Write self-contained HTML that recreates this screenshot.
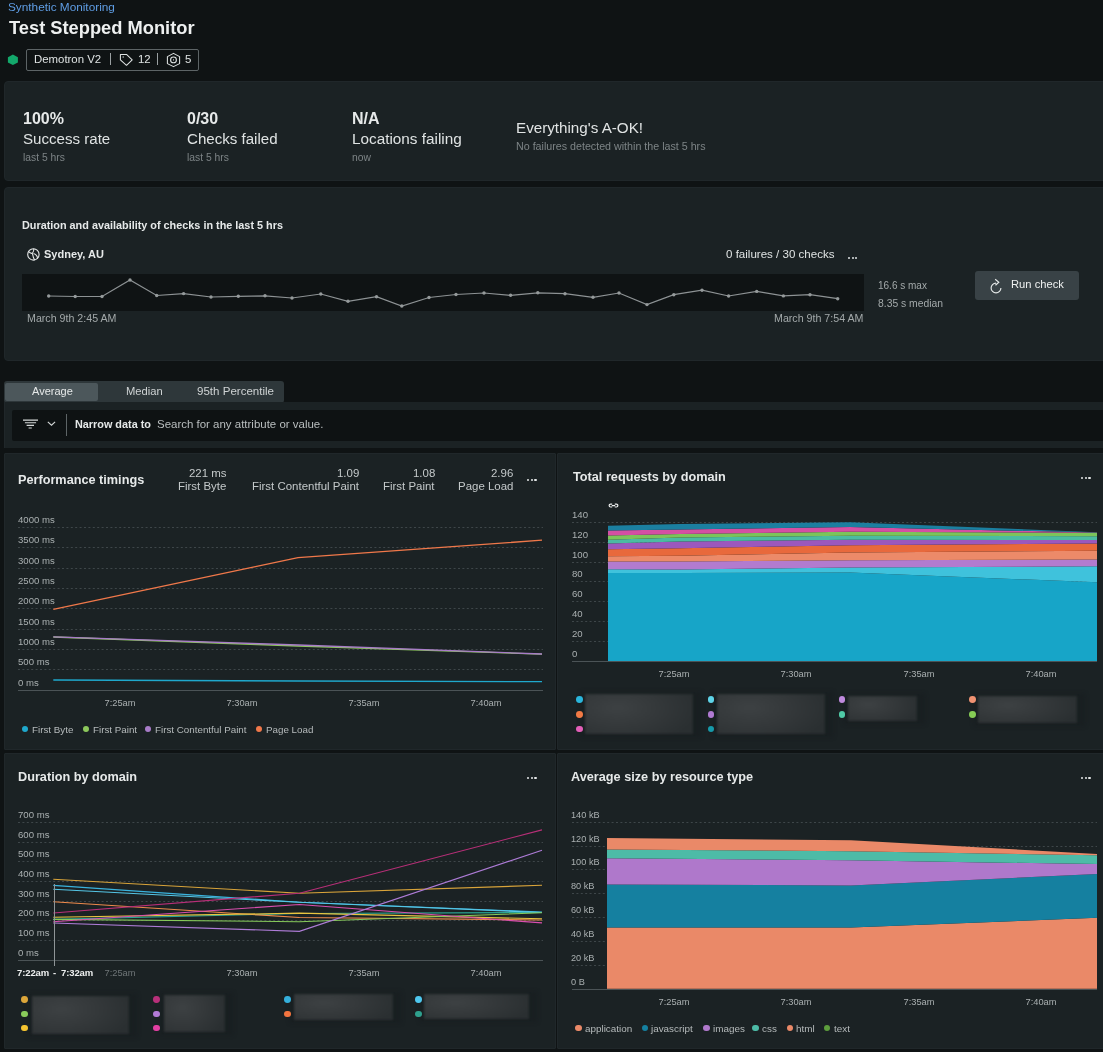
<!DOCTYPE html>
<html><head><meta charset="utf-8"><style>
html,body{margin:0;padding:0;background:#0f1314;}
body{width:1103px;height:1052px;position:relative;overflow:hidden;font-family:"Liberation Sans", sans-serif;}
.t{position:absolute;white-space:nowrap;will-change:transform;}
</style></head><body>
<div class="t" style="left:7.60px;top:2.00px;font-size:11.8px;line-height:11.8px;color:#5f9de4;font-weight:400;">Synthetic Monitoring</div>
<div class="t" style="left:9.00px;top:19.00px;font-size:18.3px;line-height:18.3px;color:#eef0f0;font-weight:700;">Test Stepped Monitor</div>
<svg style="position:absolute;left:0;top:0" width="30" height="80"><path d="M12.9 54.6 L17.9 57.3 L17.9 62.5 L12.9 65.1 L7.9 62.5 L7.9 57.3 Z" fill="#13a86b"/></svg>
<div style="position:absolute;left:26px;top:48.5px;width:171px;height:20px;border:1px solid #5d6466;border-radius:2px"></div>
<div class="t" style="left:34.00px;top:54.00px;font-size:11.4px;line-height:11.4px;color:#dfe3e3;font-weight:400;">Demotron V2</div>
<div style="position:absolute;left:110px;top:53px;width:1px;height:12px;background:#9aa0a2;"></div>
<svg style="position:absolute;left:0;top:0" width="200" height="80"><path d="M120.4 54.4 H126.5 L132.2 59.8 L126.5 65.3 L120.4 59.9 Z" fill="none" stroke="#dfe3e3" stroke-width="1.05" stroke-linejoin="round"/><circle cx="123.2" cy="56.9" r="0.75" fill="#bfc4c4"/><path d="M173.5 53.4 L179.6 56.6 L179.6 63.6 L173.5 66.6 L167.4 63.6 L167.4 56.6 Z" fill="none" stroke="#dfe3e3" stroke-width="1.05" stroke-linejoin="round"/><circle cx="173.5" cy="59.9" r="2.9" fill="none" stroke="#dfe3e3" stroke-width="1.1"/><ellipse cx="173.5" cy="59.9" rx="0.5" ry="0.8" fill="#bfc4c4"/></svg>
<div class="t" style="left:137.50px;top:54.00px;font-size:11.4px;line-height:11.4px;color:#dfe3e3;font-weight:400;">12</div>
<div style="position:absolute;left:157px;top:53px;width:1px;height:12px;background:#9aa0a2;"></div>
<div class="t" style="left:185.00px;top:54.00px;font-size:11.4px;line-height:11.4px;color:#dfe3e3;font-weight:400;">5</div>
<div style="position:absolute;left:4px;top:81px;width:1110px;height:98px;background:#1b2224;border-radius:4px;border:1px solid #20272a"></div>
<div class="t" style="left:22.50px;top:111.00px;font-size:16px;line-height:16px;color:#e6e9e9;font-weight:700;">100%</div>
<div class="t" style="left:22.50px;top:131.00px;font-size:15.1px;line-height:15.1px;color:#dfe3e3;font-weight:400;">Success rate</div>
<div class="t" style="left:22.50px;top:153.00px;font-size:10.3px;line-height:10.3px;color:#7d8486;font-weight:400;">last 5 hrs</div>
<div class="t" style="left:187.00px;top:111.00px;font-size:16px;line-height:16px;color:#e6e9e9;font-weight:700;">0/30</div>
<div class="t" style="left:187.00px;top:131.00px;font-size:15.1px;line-height:15.1px;color:#dfe3e3;font-weight:400;">Checks failed</div>
<div class="t" style="left:187.00px;top:153.00px;font-size:10.3px;line-height:10.3px;color:#7d8486;font-weight:400;">last 5 hrs</div>
<div class="t" style="left:351.50px;top:111.00px;font-size:16px;line-height:16px;color:#e6e9e9;font-weight:700;">N/A</div>
<div class="t" style="left:351.50px;top:131.00px;font-size:15.3px;line-height:15.3px;color:#dfe3e3;font-weight:400;">Locations failing</div>
<div class="t" style="left:351.50px;top:153.00px;font-size:10.3px;line-height:10.3px;color:#7d8486;font-weight:400;">now</div>
<div class="t" style="left:516.40px;top:120.00px;font-size:15.2px;line-height:15.2px;color:#e1e4e4;font-weight:400;">Everything's A-OK!</div>
<div class="t" style="left:516.40px;top:141.00px;font-size:10.7px;line-height:10.7px;color:#7d8486;font-weight:400;">No failures detected within the last 5 hrs</div>
<div style="position:absolute;left:4px;top:187px;width:1110px;height:172px;background:#1b2224;border-radius:4px;border:1px solid #20272a"></div>
<div class="t" style="left:22.40px;top:220.00px;font-size:10.85px;line-height:10.85px;color:#e6e9e9;font-weight:700;">Duration and availability of checks in the last 5 hrs</div>
<svg style="position:absolute;left:0;top:0" width="60" height="280"><circle cx="33.4" cy="254.4" r="5.7" fill="none" stroke="#e6e9e9" stroke-width="1.1"/><path d="M28.3 251.4 Q31 254.2 32.6 253 Q33.9 251.5 33.8 248.8 M32.4 253.6 Q33.2 256.4 33.5 257.8 Q34.2 259.4 34.8 260.2 M33.5 253.6 Q35.8 254.4 36.6 255.6 Q37.6 257 37.5 258.6" fill="none" stroke="#e6e9e9" stroke-width="1.05"/></svg>
<div class="t" style="left:43.70px;top:249.00px;font-size:11px;line-height:11px;color:#e6e9e9;font-weight:700;">Sydney, AU</div>
<div class="t" style="right:268.60px;top:249.00px;font-size:11.56px;line-height:11.56px;color:#dfe3e3;font-weight:400;">0 failures / 30 checks</div>
<div style="position:absolute;left:848.0px;top:257px;width:2.2px;height:2.2px;background:#dfe3e3;border-radius:1px"></div>
<div style="position:absolute;left:851.6px;top:257px;width:2.2px;height:2.2px;background:#dfe3e3;border-radius:1px"></div>
<div style="position:absolute;left:855.2px;top:257px;width:2.2px;height:2.2px;background:#dfe3e3;border-radius:1px"></div>
<div style="position:absolute;left:22px;top:274px;width:842px;height:37px;background:#0f1314;"></div>
<svg style="position:absolute;left:0;top:0" width="1103" height="360"><path d="M48.7 296.0 L75.2 296.5 L102.0 296.5 L130.0 280.0 L156.7 295.5 L183.6 293.6 L211.0 297.0 L238.3 296.3 L265.0 295.8 L292.0 298.0 L320.8 294.0 L348.0 301.3 L376.5 296.7 L401.8 306.0 L429.0 297.5 L456.0 294.5 L484.0 293.0 L510.6 295.3 L537.8 292.8 L565.0 293.7 L593.0 297.3 L619.0 293.0 L647.0 304.6 L673.8 294.7 L702.0 290.2 L728.6 296.0 L756.7 291.4 L783.4 295.9 L810.0 294.7 L837.7 298.7" fill="none" stroke="#8d9294" stroke-width="1.2"/><circle cx="48.7" cy="296.0" r="1.7" fill="#959a9b"/><circle cx="75.2" cy="296.5" r="1.7" fill="#959a9b"/><circle cx="102.0" cy="296.5" r="1.7" fill="#959a9b"/><circle cx="130.0" cy="280.0" r="1.7" fill="#959a9b"/><circle cx="156.7" cy="295.5" r="1.7" fill="#959a9b"/><circle cx="183.6" cy="293.6" r="1.7" fill="#959a9b"/><circle cx="211.0" cy="297.0" r="1.7" fill="#959a9b"/><circle cx="238.3" cy="296.3" r="1.7" fill="#959a9b"/><circle cx="265.0" cy="295.8" r="1.7" fill="#959a9b"/><circle cx="292.0" cy="298.0" r="1.7" fill="#959a9b"/><circle cx="320.8" cy="294.0" r="1.7" fill="#959a9b"/><circle cx="348.0" cy="301.3" r="1.7" fill="#959a9b"/><circle cx="376.5" cy="296.7" r="1.7" fill="#959a9b"/><circle cx="401.8" cy="306.0" r="1.7" fill="#959a9b"/><circle cx="429.0" cy="297.5" r="1.7" fill="#959a9b"/><circle cx="456.0" cy="294.5" r="1.7" fill="#959a9b"/><circle cx="484.0" cy="293.0" r="1.7" fill="#959a9b"/><circle cx="510.6" cy="295.3" r="1.7" fill="#959a9b"/><circle cx="537.8" cy="292.8" r="1.7" fill="#959a9b"/><circle cx="565.0" cy="293.7" r="1.7" fill="#959a9b"/><circle cx="593.0" cy="297.3" r="1.7" fill="#959a9b"/><circle cx="619.0" cy="293.0" r="1.7" fill="#959a9b"/><circle cx="647.0" cy="304.6" r="1.7" fill="#959a9b"/><circle cx="673.8" cy="294.7" r="1.7" fill="#959a9b"/><circle cx="702.0" cy="290.2" r="1.7" fill="#959a9b"/><circle cx="728.6" cy="296.0" r="1.7" fill="#959a9b"/><circle cx="756.7" cy="291.4" r="1.7" fill="#959a9b"/><circle cx="783.4" cy="295.9" r="1.7" fill="#959a9b"/><circle cx="810.0" cy="294.7" r="1.7" fill="#959a9b"/><circle cx="837.7" cy="298.7" r="1.7" fill="#959a9b"/></svg>
<div class="t" style="left:27.00px;top:313.00px;font-size:10.67px;line-height:10.67px;color:#a3a9aa;font-weight:400;">March 9th 2:45 AM</div>
<div class="t" style="right:239.30px;top:313.00px;font-size:10.67px;line-height:10.67px;color:#a3a9aa;font-weight:400;">March 9th 7:54 AM</div>
<div class="t" style="left:878.00px;top:281.00px;font-size:10px;line-height:10px;color:#a3a9aa;font-weight:400;">16.6 s max</div>
<div class="t" style="left:878.00px;top:299.00px;font-size:10.35px;line-height:10.35px;color:#a3a9aa;font-weight:400;">8.35 s median</div>
<div style="position:absolute;left:975px;top:271px;width:104px;height:29px;background:#394246;border-radius:3px"></div>
<svg style="position:absolute;left:960px;top:260px" width="60" height="40"><g transform="translate(-960 -260)"><path d="M996 283.1 A4.9 4.9 0 1 0 1000.9 288" fill="none" stroke="#e6e9e9" stroke-width="1.15"/><path d="M995.2 279.3 L998.8 282.3 L995.5 285.3" fill="none" stroke="#e6e9e9" stroke-width="1.15"/></g></svg>
<div class="t" style="left:1011.00px;top:279.00px;font-size:11.2px;line-height:11.2px;color:#eef0f0;font-weight:400;">Run check</div>
<div style="position:absolute;left:4px;top:381px;width:279.5px;height:21.5px;background:#2e373a;border-radius:3px"></div>
<div style="position:absolute;left:5px;top:383px;width:93px;height:17.7px;background:#4c575b;border-radius:2px"></div>
<div class="t" style="left:31.70px;top:386.00px;font-size:11px;line-height:11px;color:#e6e9e9;font-weight:400;">Average</div>
<div class="t" style="left:125.50px;top:386.00px;font-size:11.2px;line-height:11.2px;color:#cfd3d4;font-weight:400;">Median</div>
<div class="t" style="left:197.30px;top:386.00px;font-size:11.56px;line-height:11.56px;color:#cfd3d4;font-weight:400;">95th Percentile</div>
<div style="position:absolute;left:4px;top:402px;width:1110px;height:46px;background:#1b2224;border-left:1px solid #20272a;box-sizing:border-box"></div>
<div style="position:absolute;left:11.5px;top:410px;width:1100px;height:30.5px;background:#0e1213;border-radius:2px"></div>
<svg style="position:absolute;left:0;top:400px" width="60" height="40"><g transform="translate(0 -400)"><path d="M23 420.1 H38 M24.9 422.75 H36.1 M26.6 425.4 H34 M28.6 428.05 H31.8" stroke="#d5d9d9" stroke-width="1.1"/></g></svg>
<svg style="position:absolute;left:0;top:400px" width="60" height="40"><g transform="translate(0 -400)"><path d="M47.8 421.9 L51.5 425.2 L55.1 421.9" fill="none" stroke="#d5d9d9" stroke-width="1.1"/></g></svg>
<div style="position:absolute;left:66px;top:414px;width:1px;height:22px;background:#5d6466;"></div>
<div class="t" style="left:74.90px;top:419.00px;font-size:10.85px;line-height:10.85px;color:#e6e9e9;font-weight:700;">Narrow data to</div>
<div class="t" style="left:157.20px;top:419.00px;font-size:11.48px;line-height:11.48px;color:#b9bebf;font-weight:400;">Search for any attribute or value.</div>
<div style="position:absolute;left:4px;top:453px;width:552px;height:297px;background:#1b2224;border:1px solid #20272a;box-sizing:border-box;border-radius:1px"></div>
<div style="position:absolute;left:557px;top:453px;width:560px;height:297px;background:#1b2224;border:1px solid #20272a;box-sizing:border-box;border-radius:1px"></div>
<div style="position:absolute;left:4px;top:753px;width:552px;height:296px;background:#1b2224;border:1px solid #20272a;box-sizing:border-box;border-radius:1px"></div>
<div style="position:absolute;left:557px;top:753px;width:560px;height:296px;background:#1b2224;border:1px solid #20272a;box-sizing:border-box;border-radius:1px"></div>
<div class="t" style="left:18.30px;top:474.00px;font-size:12.7px;line-height:12.7px;color:#e6e9e9;font-weight:700;">Performance timings</div>
<div class="t" style="right:876.30px;top:468.00px;font-size:11.46px;line-height:11.46px;color:#c4c9ca;font-weight:400;">221 ms</div>
<div class="t" style="right:876.30px;top:481.00px;font-size:11.46px;line-height:11.46px;color:#c4c9ca;font-weight:400;">First Byte</div>
<div class="t" style="right:744.00px;top:468.00px;font-size:11.46px;line-height:11.46px;color:#c4c9ca;font-weight:400;">1.09</div>
<div class="t" style="right:744.00px;top:481.00px;font-size:11.46px;line-height:11.46px;color:#c4c9ca;font-weight:400;">First Contentful Paint</div>
<div class="t" style="right:668.00px;top:468.00px;font-size:11.46px;line-height:11.46px;color:#c4c9ca;font-weight:400;">1.08</div>
<div class="t" style="right:668.00px;top:481.00px;font-size:11.46px;line-height:11.46px;color:#c4c9ca;font-weight:400;">First Paint</div>
<div class="t" style="right:589.70px;top:468.00px;font-size:11.46px;line-height:11.46px;color:#c4c9ca;font-weight:400;">2.96</div>
<div class="t" style="right:589.70px;top:481.00px;font-size:11.46px;line-height:11.46px;color:#c4c9ca;font-weight:400;">Page Load</div>
<div style="position:absolute;left:526.8px;top:478.6px;width:2.4px;height:2.4px;background:#e6e9e9;border-radius:1px"></div>
<div style="position:absolute;left:530.5px;top:478.6px;width:2.4px;height:2.4px;background:#e6e9e9;border-radius:1px"></div>
<div style="position:absolute;left:534.1999999999999px;top:478.6px;width:2.4px;height:2.4px;background:#e6e9e9;border-radius:1px"></div>
<div class="t" style="left:18.30px;top:515.00px;font-size:9.6px;line-height:9.6px;color:#aab0b1;font-weight:400;">4000 ms</div>
<div class="t" style="left:18.30px;top:535.00px;font-size:9.6px;line-height:9.6px;color:#aab0b1;font-weight:400;">3500 ms</div>
<div class="t" style="left:18.30px;top:556.00px;font-size:9.6px;line-height:9.6px;color:#aab0b1;font-weight:400;">3000 ms</div>
<div class="t" style="left:18.30px;top:576.00px;font-size:9.6px;line-height:9.6px;color:#aab0b1;font-weight:400;">2500 ms</div>
<div class="t" style="left:18.30px;top:596.00px;font-size:9.6px;line-height:9.6px;color:#aab0b1;font-weight:400;">2000 ms</div>
<div class="t" style="left:18.30px;top:617.00px;font-size:9.6px;line-height:9.6px;color:#aab0b1;font-weight:400;">1500 ms</div>
<div class="t" style="left:18.30px;top:637.00px;font-size:9.6px;line-height:9.6px;color:#aab0b1;font-weight:400;">1000 ms</div>
<div class="t" style="left:18.30px;top:657.00px;font-size:9.6px;line-height:9.6px;color:#aab0b1;font-weight:400;">500 ms</div>
<div class="t" style="left:18.30px;top:678.00px;font-size:9.6px;line-height:9.6px;color:#aab0b1;font-weight:400;">0 ms</div>
<svg style="position:absolute;left:0;top:0" width="556" height="750"><line x1="18" y1="527.5" x2="543" y2="527.5" stroke="#3e4649" stroke-width="1" stroke-dasharray="2 2.4"/><line x1="18" y1="547.5" x2="543" y2="547.5" stroke="#3e4649" stroke-width="1" stroke-dasharray="2 2.4"/><line x1="18" y1="568.5" x2="543" y2="568.5" stroke="#3e4649" stroke-width="1" stroke-dasharray="2 2.4"/><line x1="18" y1="588.5" x2="543" y2="588.5" stroke="#3e4649" stroke-width="1" stroke-dasharray="2 2.4"/><line x1="18" y1="608.5" x2="543" y2="608.5" stroke="#3e4649" stroke-width="1" stroke-dasharray="2 2.4"/><line x1="18" y1="629.5" x2="543" y2="629.5" stroke="#3e4649" stroke-width="1" stroke-dasharray="2 2.4"/><line x1="18" y1="649.5" x2="543" y2="649.5" stroke="#3e4649" stroke-width="1" stroke-dasharray="2 2.4"/><line x1="18" y1="669.5" x2="543" y2="669.5" stroke="#3e4649" stroke-width="1" stroke-dasharray="2 2.4"/><line x1="18" y1="690.5" x2="543" y2="690.5" stroke="#4b5356" stroke-width="1"/><path d="M53.3 680 L298 681 L542 681.7" fill="none" stroke="#1fa8cc" stroke-width="1.3"/><path d="M53.3 637 L298 646 L542 654.2" fill="none" stroke="#8dc85c" stroke-width="1.3"/><path d="M53.3 636.8 L298 645 L542 654" fill="none" stroke="#a87cc8" stroke-width="1.3"/><path d="M53.3 609.4 L298 557.6 L542 540.2" fill="none" stroke="#f0784a" stroke-width="1.3"/></svg>
<div class="t" style="left:120.00px;transform:translateX(-50%);top:699.00px;font-size:9.3px;line-height:9.3px;color:#aab0b1;font-weight:400;">7:25am</div>
<div class="t" style="left:241.50px;transform:translateX(-50%);top:699.00px;font-size:9.3px;line-height:9.3px;color:#aab0b1;font-weight:400;">7:30am</div>
<div class="t" style="left:363.50px;transform:translateX(-50%);top:699.00px;font-size:9.3px;line-height:9.3px;color:#aab0b1;font-weight:400;">7:35am</div>
<div class="t" style="left:485.50px;transform:translateX(-50%);top:699.00px;font-size:9.3px;line-height:9.3px;color:#aab0b1;font-weight:400;">7:40am</div>
<div style="position:absolute;left:21.8px;top:725.8px;width:6.4px;height:6.4px;border-radius:50%;background:#1fa8cc"></div>
<div class="t" style="left:32.20px;top:725.00px;font-size:9.8px;line-height:9.8px;color:#b5babb;font-weight:400;">First Byte</div>
<div style="position:absolute;left:83.1px;top:725.8px;width:6.4px;height:6.4px;border-radius:50%;background:#8dc85c"></div>
<div class="t" style="left:92.70px;top:725.00px;font-size:9.8px;line-height:9.8px;color:#b5babb;font-weight:400;">First Paint</div>
<div style="position:absolute;left:144.8px;top:725.8px;width:6.4px;height:6.4px;border-radius:50%;background:#a87cc8"></div>
<div class="t" style="left:155.40px;top:725.00px;font-size:9.8px;line-height:9.8px;color:#b5babb;font-weight:400;">First Contentful Paint</div>
<div style="position:absolute;left:255.8px;top:725.8px;width:6.4px;height:6.4px;border-radius:50%;background:#f0784a"></div>
<div class="t" style="left:265.80px;top:725.00px;font-size:9.8px;line-height:9.8px;color:#b5babb;font-weight:400;">Page Load</div>
<div class="t" style="left:572.70px;top:471.00px;font-size:12.7px;line-height:12.7px;color:#e6e9e9;font-weight:700;">Total requests by domain</div>
<div style="position:absolute;left:1081.0px;top:476.5px;width:2.4px;height:2.4px;background:#e6e9e9;border-radius:1px"></div>
<div style="position:absolute;left:1084.7px;top:476.5px;width:2.4px;height:2.4px;background:#e6e9e9;border-radius:1px"></div>
<div style="position:absolute;left:1088.4px;top:476.5px;width:2.4px;height:2.4px;background:#e6e9e9;border-radius:1px"></div>
<svg style="position:absolute;left:600px;top:495px" width="30" height="20"><g transform="translate(-600 -495)"><path d="M612.2 504.1 H610.6 A1.45 1.45 0 0 0 610.6 507 H612.2 M614.8 504.1 H616.4 A1.45 1.45 0 0 1 616.4 507 H614.8 M611.8 505.55 H615.2" fill="none" stroke="#eef0f0" stroke-width="1.2"/></g></svg>
<div class="t" style="left:572.20px;top:510.00px;font-size:9.6px;line-height:9.6px;color:#aab0b1;font-weight:400;">140</div>
<div class="t" style="left:572.20px;top:530.00px;font-size:9.6px;line-height:9.6px;color:#aab0b1;font-weight:400;">120</div>
<div class="t" style="left:572.20px;top:550.00px;font-size:9.6px;line-height:9.6px;color:#aab0b1;font-weight:400;">100</div>
<div class="t" style="left:572.20px;top:569.00px;font-size:9.6px;line-height:9.6px;color:#aab0b1;font-weight:400;">80</div>
<div class="t" style="left:572.20px;top:589.00px;font-size:9.6px;line-height:9.6px;color:#aab0b1;font-weight:400;">60</div>
<div class="t" style="left:572.20px;top:609.00px;font-size:9.6px;line-height:9.6px;color:#aab0b1;font-weight:400;">40</div>
<div class="t" style="left:572.20px;top:629.00px;font-size:9.6px;line-height:9.6px;color:#aab0b1;font-weight:400;">20</div>
<div class="t" style="left:572.20px;top:649.00px;font-size:9.6px;line-height:9.6px;color:#aab0b1;font-weight:400;">0</div>
<svg style="position:absolute;left:0;top:0" width="1103" height="750"><line x1="572" y1="522.5" x2="1097" y2="522.5" stroke="#3e4649" stroke-width="1" stroke-dasharray="2 2.4"/><line x1="572" y1="542.5" x2="1097" y2="542.5" stroke="#3e4649" stroke-width="1" stroke-dasharray="2 2.4"/><line x1="572" y1="562.5" x2="1097" y2="562.5" stroke="#3e4649" stroke-width="1" stroke-dasharray="2 2.4"/><line x1="572" y1="581.5" x2="1097" y2="581.5" stroke="#3e4649" stroke-width="1" stroke-dasharray="2 2.4"/><line x1="572" y1="601.5" x2="1097" y2="601.5" stroke="#3e4649" stroke-width="1" stroke-dasharray="2 2.4"/><line x1="572" y1="621.5" x2="1097" y2="621.5" stroke="#3e4649" stroke-width="1" stroke-dasharray="2 2.4"/><line x1="572" y1="641.5" x2="1097" y2="641.5" stroke="#3e4649" stroke-width="1" stroke-dasharray="2 2.4"/><path d="M608 573 L680 573 L850 572.5 L1097 582.3 L1097 661 L850 661 L680 661 L608 661 Z" fill="#17a5c8"/><path d="M608 569.3 L680 569.4 L850 567.5 L1097 566.3 L1097 582.3 L850 572.5 L680 573 L608 573 Z" fill="#3fc2dc"/><path d="M608 561.6 L680 561.6 L850 560.3 L1097 559.6 L1097 566.3 L850 567.5 L680 569.4 L608 569.3 Z" fill="#b27bcf"/><path d="M608 556.2 L680 555.8 L850 552.5 L1097 550.8 L1097 559.6 L850 560.3 L680 561.6 L608 561.6 Z" fill="#ec8a69"/><path d="M608 549.3 L680 548.2 L850 545.3 L1097 543.6 L1097 550.8 L850 552.5 L680 555.8 L608 556.2 Z" fill="#e8693c"/><path d="M608 543.5 L680 541.6 L850 539.8 L1097 540 L1097 543.6 L850 545.3 L680 548.2 L608 549.3 Z" fill="#9b58bd"/><path d="M608 539.7 L680 537.6 L850 535.8 L1097 536.2 L1097 540 L850 539.8 L680 541.6 L608 543.5 Z" fill="#4bbba2"/><path d="M608 535.4 L680 534 L850 531.8 L1097 532.7 L1097 536.2 L850 535.8 L680 537.6 L608 539.7 Z" fill="#7cc45a"/><path d="M608 530.4 L680 529.5 L850 527.1 L1097 532.5 L1097 532.7 L850 531.8 L680 534 L608 535.4 Z" fill="#d44fa3"/><path d="M608 525.8 L680 524 L850 522.2 L1097 532.3 L1097 532.5 L850 527.1 L680 529.5 L608 530.4 Z" fill="#1b7fa0"/><line x1="572" y1="661.5" x2="1097" y2="661.5" stroke="#4b5356" stroke-width="1"/></svg>
<div class="t" style="left:674.00px;transform:translateX(-50%);top:670.00px;font-size:9.3px;line-height:9.3px;color:#aab0b1;font-weight:400;">7:25am</div>
<div class="t" style="left:796.00px;transform:translateX(-50%);top:670.00px;font-size:9.3px;line-height:9.3px;color:#aab0b1;font-weight:400;">7:30am</div>
<div class="t" style="left:918.50px;transform:translateX(-50%);top:670.00px;font-size:9.3px;line-height:9.3px;color:#aab0b1;font-weight:400;">7:35am</div>
<div class="t" style="left:1040.50px;transform:translateX(-50%);top:670.00px;font-size:9.3px;line-height:9.3px;color:#aab0b1;font-weight:400;">7:40am</div>
<div style="position:absolute;left:581.4px;top:691.7px;width:120px;height:45px;background:#181e20;opacity:0.7;filter:blur(2px)"></div>
<div style="position:absolute;left:585.4px;top:693.7px;width:108px;height:40px;background:radial-gradient(ellipse 75% 95% at 30% 35%,#3d4143 0%,#35393b 45%,#2a2f31 100%);filter:blur(1px)"></div>
<div style="position:absolute;left:576.1px;top:696.4px;width:6.8px;height:6.8px;border-radius:50%;background:#2ab6dc"></div>
<div style="position:absolute;left:576.1px;top:711.1px;width:6.8px;height:6.8px;border-radius:50%;background:#f17a45"></div>
<div style="position:absolute;left:576.1px;top:725.6px;width:6.8px;height:6.8px;border-radius:50%;background:#e35fb8"></div>
<div style="position:absolute;left:713px;top:691.7px;width:120px;height:45px;background:#181e20;opacity:0.7;filter:blur(2px)"></div>
<div style="position:absolute;left:717px;top:693.7px;width:108px;height:40px;background:radial-gradient(ellipse 75% 95% at 30% 35%,#3d4143 0%,#35393b 45%,#2a2f31 100%);filter:blur(1px)"></div>
<div style="position:absolute;left:707.6px;top:696.4px;width:6.8px;height:6.8px;border-radius:50%;background:#5ed4e8"></div>
<div style="position:absolute;left:707.6px;top:711.1px;width:6.8px;height:6.8px;border-radius:50%;background:#b07ad2"></div>
<div style="position:absolute;left:707.6px;top:725.6px;width:6.8px;height:6.8px;border-radius:50%;background:#169aaa"></div>
<div style="position:absolute;left:844.4px;top:693.7px;width:80.6px;height:30px;background:#181e20;opacity:0.7;filter:blur(2px)"></div>
<div style="position:absolute;left:848.4px;top:695.7px;width:68.6px;height:25px;background:radial-gradient(ellipse 75% 95% at 30% 35%,#3d4143 0%,#35393b 45%,#2a2f31 100%);filter:blur(1px)"></div>
<div style="position:absolute;left:838.6px;top:696.1px;width:6.8px;height:6.8px;border-radius:50%;background:#c08ade"></div>
<div style="position:absolute;left:838.6px;top:711.1px;width:6.8px;height:6.8px;border-radius:50%;background:#4fcaa6"></div>
<div style="position:absolute;left:973.8px;top:693.7px;width:111px;height:32px;background:#181e20;opacity:0.7;filter:blur(2px)"></div>
<div style="position:absolute;left:977.8px;top:695.7px;width:99px;height:27px;background:radial-gradient(ellipse 75% 95% at 30% 35%,#3d4143 0%,#35393b 45%,#2a2f31 100%);filter:blur(1px)"></div>
<div style="position:absolute;left:969.4px;top:696.1px;width:6.8px;height:6.8px;border-radius:50%;background:#f09272"></div>
<div style="position:absolute;left:969.4px;top:711.1px;width:6.8px;height:6.8px;border-radius:50%;background:#86cc55"></div>
<div class="t" style="left:18.30px;top:771.00px;font-size:12.7px;line-height:12.7px;color:#e6e9e9;font-weight:700;">Duration by domain</div>
<div style="position:absolute;left:526.8px;top:776.5px;width:2.4px;height:2.4px;background:#e6e9e9;border-radius:1px"></div>
<div style="position:absolute;left:530.5px;top:776.5px;width:2.4px;height:2.4px;background:#e6e9e9;border-radius:1px"></div>
<div style="position:absolute;left:534.1999999999999px;top:776.5px;width:2.4px;height:2.4px;background:#e6e9e9;border-radius:1px"></div>
<div class="t" style="left:18.30px;top:810.00px;font-size:9.6px;line-height:9.6px;color:#aab0b1;font-weight:400;">700 ms</div>
<div class="t" style="left:18.30px;top:830.00px;font-size:9.6px;line-height:9.6px;color:#aab0b1;font-weight:400;">600 ms</div>
<div class="t" style="left:18.30px;top:849.00px;font-size:9.6px;line-height:9.6px;color:#aab0b1;font-weight:400;">500 ms</div>
<div class="t" style="left:18.30px;top:869.00px;font-size:9.6px;line-height:9.6px;color:#aab0b1;font-weight:400;">400 ms</div>
<div class="t" style="left:18.30px;top:889.00px;font-size:9.6px;line-height:9.6px;color:#aab0b1;font-weight:400;">300 ms</div>
<div class="t" style="left:18.30px;top:908.00px;font-size:9.6px;line-height:9.6px;color:#aab0b1;font-weight:400;">200 ms</div>
<div class="t" style="left:18.30px;top:928.00px;font-size:9.6px;line-height:9.6px;color:#aab0b1;font-weight:400;">100 ms</div>
<div class="t" style="left:18.30px;top:948.00px;font-size:9.6px;line-height:9.6px;color:#aab0b1;font-weight:400;">0 ms</div>
<svg style="position:absolute;left:0;top:0" width="556" height="1052"><line x1="18" y1="822.5" x2="543" y2="822.5" stroke="#3e4649" stroke-width="1" stroke-dasharray="2 2.4"/><line x1="18" y1="842.5" x2="543" y2="842.5" stroke="#3e4649" stroke-width="1" stroke-dasharray="2 2.4"/><line x1="18" y1="861.5" x2="543" y2="861.5" stroke="#3e4649" stroke-width="1" stroke-dasharray="2 2.4"/><line x1="18" y1="881.5" x2="543" y2="881.5" stroke="#3e4649" stroke-width="1" stroke-dasharray="2 2.4"/><line x1="18" y1="901.5" x2="543" y2="901.5" stroke="#3e4649" stroke-width="1" stroke-dasharray="2 2.4"/><line x1="18" y1="920.5" x2="543" y2="920.5" stroke="#3e4649" stroke-width="1" stroke-dasharray="2 2.4"/><line x1="18" y1="940.5" x2="543" y2="940.5" stroke="#3e4649" stroke-width="1" stroke-dasharray="2 2.4"/><line x1="18" y1="960.5" x2="543" y2="960.5" stroke="#4b5356" stroke-width="1"/><path d="M53.3 919.4 L299.4 913.5 L542 912.5" fill="none" stroke="#2aa592" stroke-width="1.15"/><path d="M53.3 879.3 L299.4 893.2 L542 885.3" fill="none" stroke="#d9a43a" stroke-width="1.15"/><path d="M53.3 885.4 L299.4 902.3 L542 912" fill="none" stroke="#3ab3dd" stroke-width="1.15"/><path d="M53.3 889.2 L299.4 902.3 L542 912.5" fill="none" stroke="#55c6e6" stroke-width="1.15"/><path d="M53.3 901.7 L299.4 917.5 L542 920" fill="none" stroke="#ee8a4c" stroke-width="1.15"/><path d="M53.3 917.3 L299.4 913.2 L542 918.8" fill="none" stroke="#e8c440" stroke-width="1.15"/><path d="M53.3 919.4 L299.4 921.7 L542 912.8" fill="none" stroke="#86c95a" stroke-width="1.15"/><path d="M53.3 921.7 L299.4 904.5 L542 922.9" fill="none" stroke="#d94fae" stroke-width="1.15"/><path d="M53.3 913 L299.4 893.2 L542 829.9" fill="none" stroke="#b82f78" stroke-width="1.15"/><path d="M53.3 923 L299.4 931.3 L542 850.2" fill="none" stroke="#ad7bd6" stroke-width="1.15"/><line x1="54.5" y1="884" x2="54.5" y2="966" stroke="#8f9597" stroke-width="1"/></svg>
<div class="t" style="left:241.50px;transform:translateX(-50%);top:969.00px;font-size:9.3px;line-height:9.3px;color:#aab0b1;font-weight:400;">7:30am</div>
<div class="t" style="left:363.50px;transform:translateX(-50%);top:969.00px;font-size:9.3px;line-height:9.3px;color:#aab0b1;font-weight:400;">7:35am</div>
<div class="t" style="left:485.50px;transform:translateX(-50%);top:969.00px;font-size:9.3px;line-height:9.3px;color:#aab0b1;font-weight:400;">7:40am</div>
<div class="t" style="left:120.00px;transform:translateX(-50%);top:969.00px;font-size:9.3px;line-height:9.3px;color:#6f7678;font-weight:400;">7:25am</div>
<div class="t" style="left:17.30px;top:968.00px;font-size:9.5px;line-height:9.5px;color:#eef0f0;font-weight:700;letter-spacing:-0.1px;">7:22am</div>
<div class="t" style="left:53.20px;top:968.00px;font-size:9.5px;line-height:9.5px;color:#eef0f0;font-weight:700;">-</div>
<div class="t" style="left:61.00px;top:968.00px;font-size:9.5px;line-height:9.5px;color:#eef0f0;font-weight:700;letter-spacing:-0.1px;">7:32am</div>
<div style="position:absolute;left:27.5px;top:994px;width:109px;height:43px;background:#181e20;opacity:0.7;filter:blur(2px)"></div>
<div style="position:absolute;left:31.5px;top:996px;width:97px;height:38px;background:radial-gradient(ellipse 75% 95% at 30% 35%,#3d4143 0%,#35393b 45%,#2a2f31 100%);filter:blur(1px)"></div>
<div style="position:absolute;left:21.0px;top:996.3000000000001px;width:6.8px;height:6.8px;border-radius:50%;background:#dca63a"></div>
<div style="position:absolute;left:21.0px;top:1010.6px;width:6.8px;height:6.8px;border-radius:50%;background:#8acb5b"></div>
<div style="position:absolute;left:21.0px;top:1024.6px;width:6.8px;height:6.8px;border-radius:50%;background:#f4c430"></div>
<div style="position:absolute;left:159.5px;top:993px;width:73.4px;height:41.7px;background:#181e20;opacity:0.7;filter:blur(2px)"></div>
<div style="position:absolute;left:163.5px;top:995px;width:61.4px;height:36.7px;background:radial-gradient(ellipse 75% 95% at 30% 35%,#3d4143 0%,#35393b 45%,#2a2f31 100%);filter:blur(1px)"></div>
<div style="position:absolute;left:152.9px;top:996.3000000000001px;width:6.8px;height:6.8px;border-radius:50%;background:#b8307a"></div>
<div style="position:absolute;left:152.9px;top:1010.6px;width:6.8px;height:6.8px;border-radius:50%;background:#b27ad6"></div>
<div style="position:absolute;left:152.9px;top:1024.6px;width:6.8px;height:6.8px;border-radius:50%;background:#e23fa2"></div>
<div style="position:absolute;left:290.4px;top:991.7px;width:111px;height:31.3px;background:#181e20;opacity:0.7;filter:blur(2px)"></div>
<div style="position:absolute;left:294.4px;top:993.7px;width:99px;height:26.3px;background:radial-gradient(ellipse 75% 95% at 30% 35%,#3d4143 0%,#35393b 45%,#2a2f31 100%);filter:blur(1px)"></div>
<div style="position:absolute;left:283.90000000000003px;top:996.3000000000001px;width:6.8px;height:6.8px;border-radius:50%;background:#35b0dc"></div>
<div style="position:absolute;left:283.90000000000003px;top:1010.6px;width:6.8px;height:6.8px;border-radius:50%;background:#f2743f"></div>
<div style="position:absolute;left:420.4px;top:992px;width:117px;height:30px;background:#181e20;opacity:0.7;filter:blur(2px)"></div>
<div style="position:absolute;left:424.4px;top:994px;width:105px;height:25px;background:radial-gradient(ellipse 75% 95% at 30% 35%,#3d4143 0%,#35393b 45%,#2a2f31 100%);filter:blur(1px)"></div>
<div style="position:absolute;left:415.40000000000003px;top:996.3000000000001px;width:6.8px;height:6.8px;border-radius:50%;background:#4fc8ef"></div>
<div style="position:absolute;left:415.40000000000003px;top:1010.6px;width:6.8px;height:6.8px;border-radius:50%;background:#2fa18e"></div>
<div class="t" style="left:571.40px;top:771.00px;font-size:12.7px;line-height:12.7px;color:#e6e9e9;font-weight:700;">Average size by resource type</div>
<div style="position:absolute;left:1081.0px;top:776.5px;width:2.4px;height:2.4px;background:#e6e9e9;border-radius:1px"></div>
<div style="position:absolute;left:1084.7px;top:776.5px;width:2.4px;height:2.4px;background:#e6e9e9;border-radius:1px"></div>
<div style="position:absolute;left:1088.4px;top:776.5px;width:2.4px;height:2.4px;background:#e6e9e9;border-radius:1px"></div>
<div class="t" style="left:571.30px;top:811.00px;font-size:9.2px;line-height:9.2px;color:#aab0b1;font-weight:400;">140 kB</div>
<div class="t" style="left:571.30px;top:835.00px;font-size:9.2px;line-height:9.2px;color:#aab0b1;font-weight:400;">120 kB</div>
<div class="t" style="left:571.30px;top:858.00px;font-size:9.2px;line-height:9.2px;color:#aab0b1;font-weight:400;">100 kB</div>
<div class="t" style="left:571.30px;top:882.00px;font-size:9.2px;line-height:9.2px;color:#aab0b1;font-weight:400;">80 kB</div>
<div class="t" style="left:571.30px;top:906.00px;font-size:9.2px;line-height:9.2px;color:#aab0b1;font-weight:400;">60 kB</div>
<div class="t" style="left:571.30px;top:930.00px;font-size:9.2px;line-height:9.2px;color:#aab0b1;font-weight:400;">40 kB</div>
<div class="t" style="left:571.30px;top:954.00px;font-size:9.2px;line-height:9.2px;color:#aab0b1;font-weight:400;">20 kB</div>
<div class="t" style="left:571.30px;top:978.00px;font-size:9.2px;line-height:9.2px;color:#aab0b1;font-weight:400;">0 B</div>
<svg style="position:absolute;left:0;top:0" width="1103" height="1052"><line x1="572" y1="822.5" x2="1097" y2="822.5" stroke="#3e4649" stroke-width="1" stroke-dasharray="2 2.4"/><line x1="572" y1="846.5" x2="1097" y2="846.5" stroke="#3e4649" stroke-width="1" stroke-dasharray="2 2.4"/><line x1="572" y1="869.5" x2="1097" y2="869.5" stroke="#3e4649" stroke-width="1" stroke-dasharray="2 2.4"/><line x1="572" y1="893.5" x2="1097" y2="893.5" stroke="#3e4649" stroke-width="1" stroke-dasharray="2 2.4"/><line x1="572" y1="917.5" x2="1097" y2="917.5" stroke="#3e4649" stroke-width="1" stroke-dasharray="2 2.4"/><line x1="572" y1="941.5" x2="1097" y2="941.5" stroke="#3e4649" stroke-width="1" stroke-dasharray="2 2.4"/><line x1="572" y1="965.5" x2="1097" y2="965.5" stroke="#3e4649" stroke-width="1" stroke-dasharray="2 2.4"/><path d="M607 927.5 L851 927.5 L1097 917.8 L1097 988.8 L851 988.8 L607 988.8 Z" fill="#ea8968"/><path d="M607 884.4 L851 885.4 L1097 874.1 L1097 917.8 L851 927.5 L607 927.5 Z" fill="#1580a0"/><path d="M607 858.2 L851 860.3 L1097 864.1 L1097 874.1 L851 885.4 L607 884.4 Z" fill="#af78cb"/><path d="M607 849.4 L851 851.3 L1097 855.3 L1097 864.1 L851 860.3 L607 858.2 Z" fill="#4dbba7"/><path d="M607 838 L851 840.3 L1097 853.9 L1097 855.3 L851 851.3 L607 849.4 Z" fill="#ea8968"/><line x1="572" y1="989.5" x2="1097" y2="989.5" stroke="#4b5356" stroke-width="1"/></svg>
<div class="t" style="left:673.50px;transform:translateX(-50%);top:998.00px;font-size:9.3px;line-height:9.3px;color:#aab0b1;font-weight:400;">7:25am</div>
<div class="t" style="left:796.00px;transform:translateX(-50%);top:998.00px;font-size:9.3px;line-height:9.3px;color:#aab0b1;font-weight:400;">7:30am</div>
<div class="t" style="left:918.50px;transform:translateX(-50%);top:998.00px;font-size:9.3px;line-height:9.3px;color:#aab0b1;font-weight:400;">7:35am</div>
<div class="t" style="left:1040.50px;transform:translateX(-50%);top:998.00px;font-size:9.3px;line-height:9.3px;color:#aab0b1;font-weight:400;">7:40am</div>
<div style="position:absolute;left:575.4px;top:1025.1px;width:6.4px;height:6.4px;border-radius:50%;background:#ea8968"></div>
<div class="t" style="left:585.00px;top:1024.00px;font-size:9.9px;line-height:9.9px;color:#b5babb;font-weight:400;">application</div>
<div style="position:absolute;left:642.0999999999999px;top:1025.1px;width:6.4px;height:6.4px;border-radius:50%;background:#1580a0"></div>
<div class="t" style="left:651.30px;top:1024.00px;font-size:9.9px;line-height:9.9px;color:#b5babb;font-weight:400;">javascript</div>
<div style="position:absolute;left:703.3px;top:1025.1px;width:6.4px;height:6.4px;border-radius:50%;background:#af78cb"></div>
<div class="t" style="left:712.50px;top:1024.00px;font-size:9.9px;line-height:9.9px;color:#b5babb;font-weight:400;">images</div>
<div style="position:absolute;left:752.4px;top:1025.1px;width:6.4px;height:6.4px;border-radius:50%;background:#4dbba7"></div>
<div class="t" style="left:762.00px;top:1024.00px;font-size:9.9px;line-height:9.9px;color:#b5babb;font-weight:400;">css</div>
<div style="position:absolute;left:786.5px;top:1025.1px;width:6.4px;height:6.4px;border-radius:50%;background:#ea8968"></div>
<div class="t" style="left:795.70px;top:1024.00px;font-size:9.9px;line-height:9.9px;color:#b5babb;font-weight:400;">html</div>
<div style="position:absolute;left:824.0999999999999px;top:1025.1px;width:6.4px;height:6.4px;border-radius:50%;background:#5d9e3c"></div>
<div class="t" style="left:833.90px;top:1024.00px;font-size:9.9px;line-height:9.9px;color:#b5babb;font-weight:400;">text</div>
</body></html>
